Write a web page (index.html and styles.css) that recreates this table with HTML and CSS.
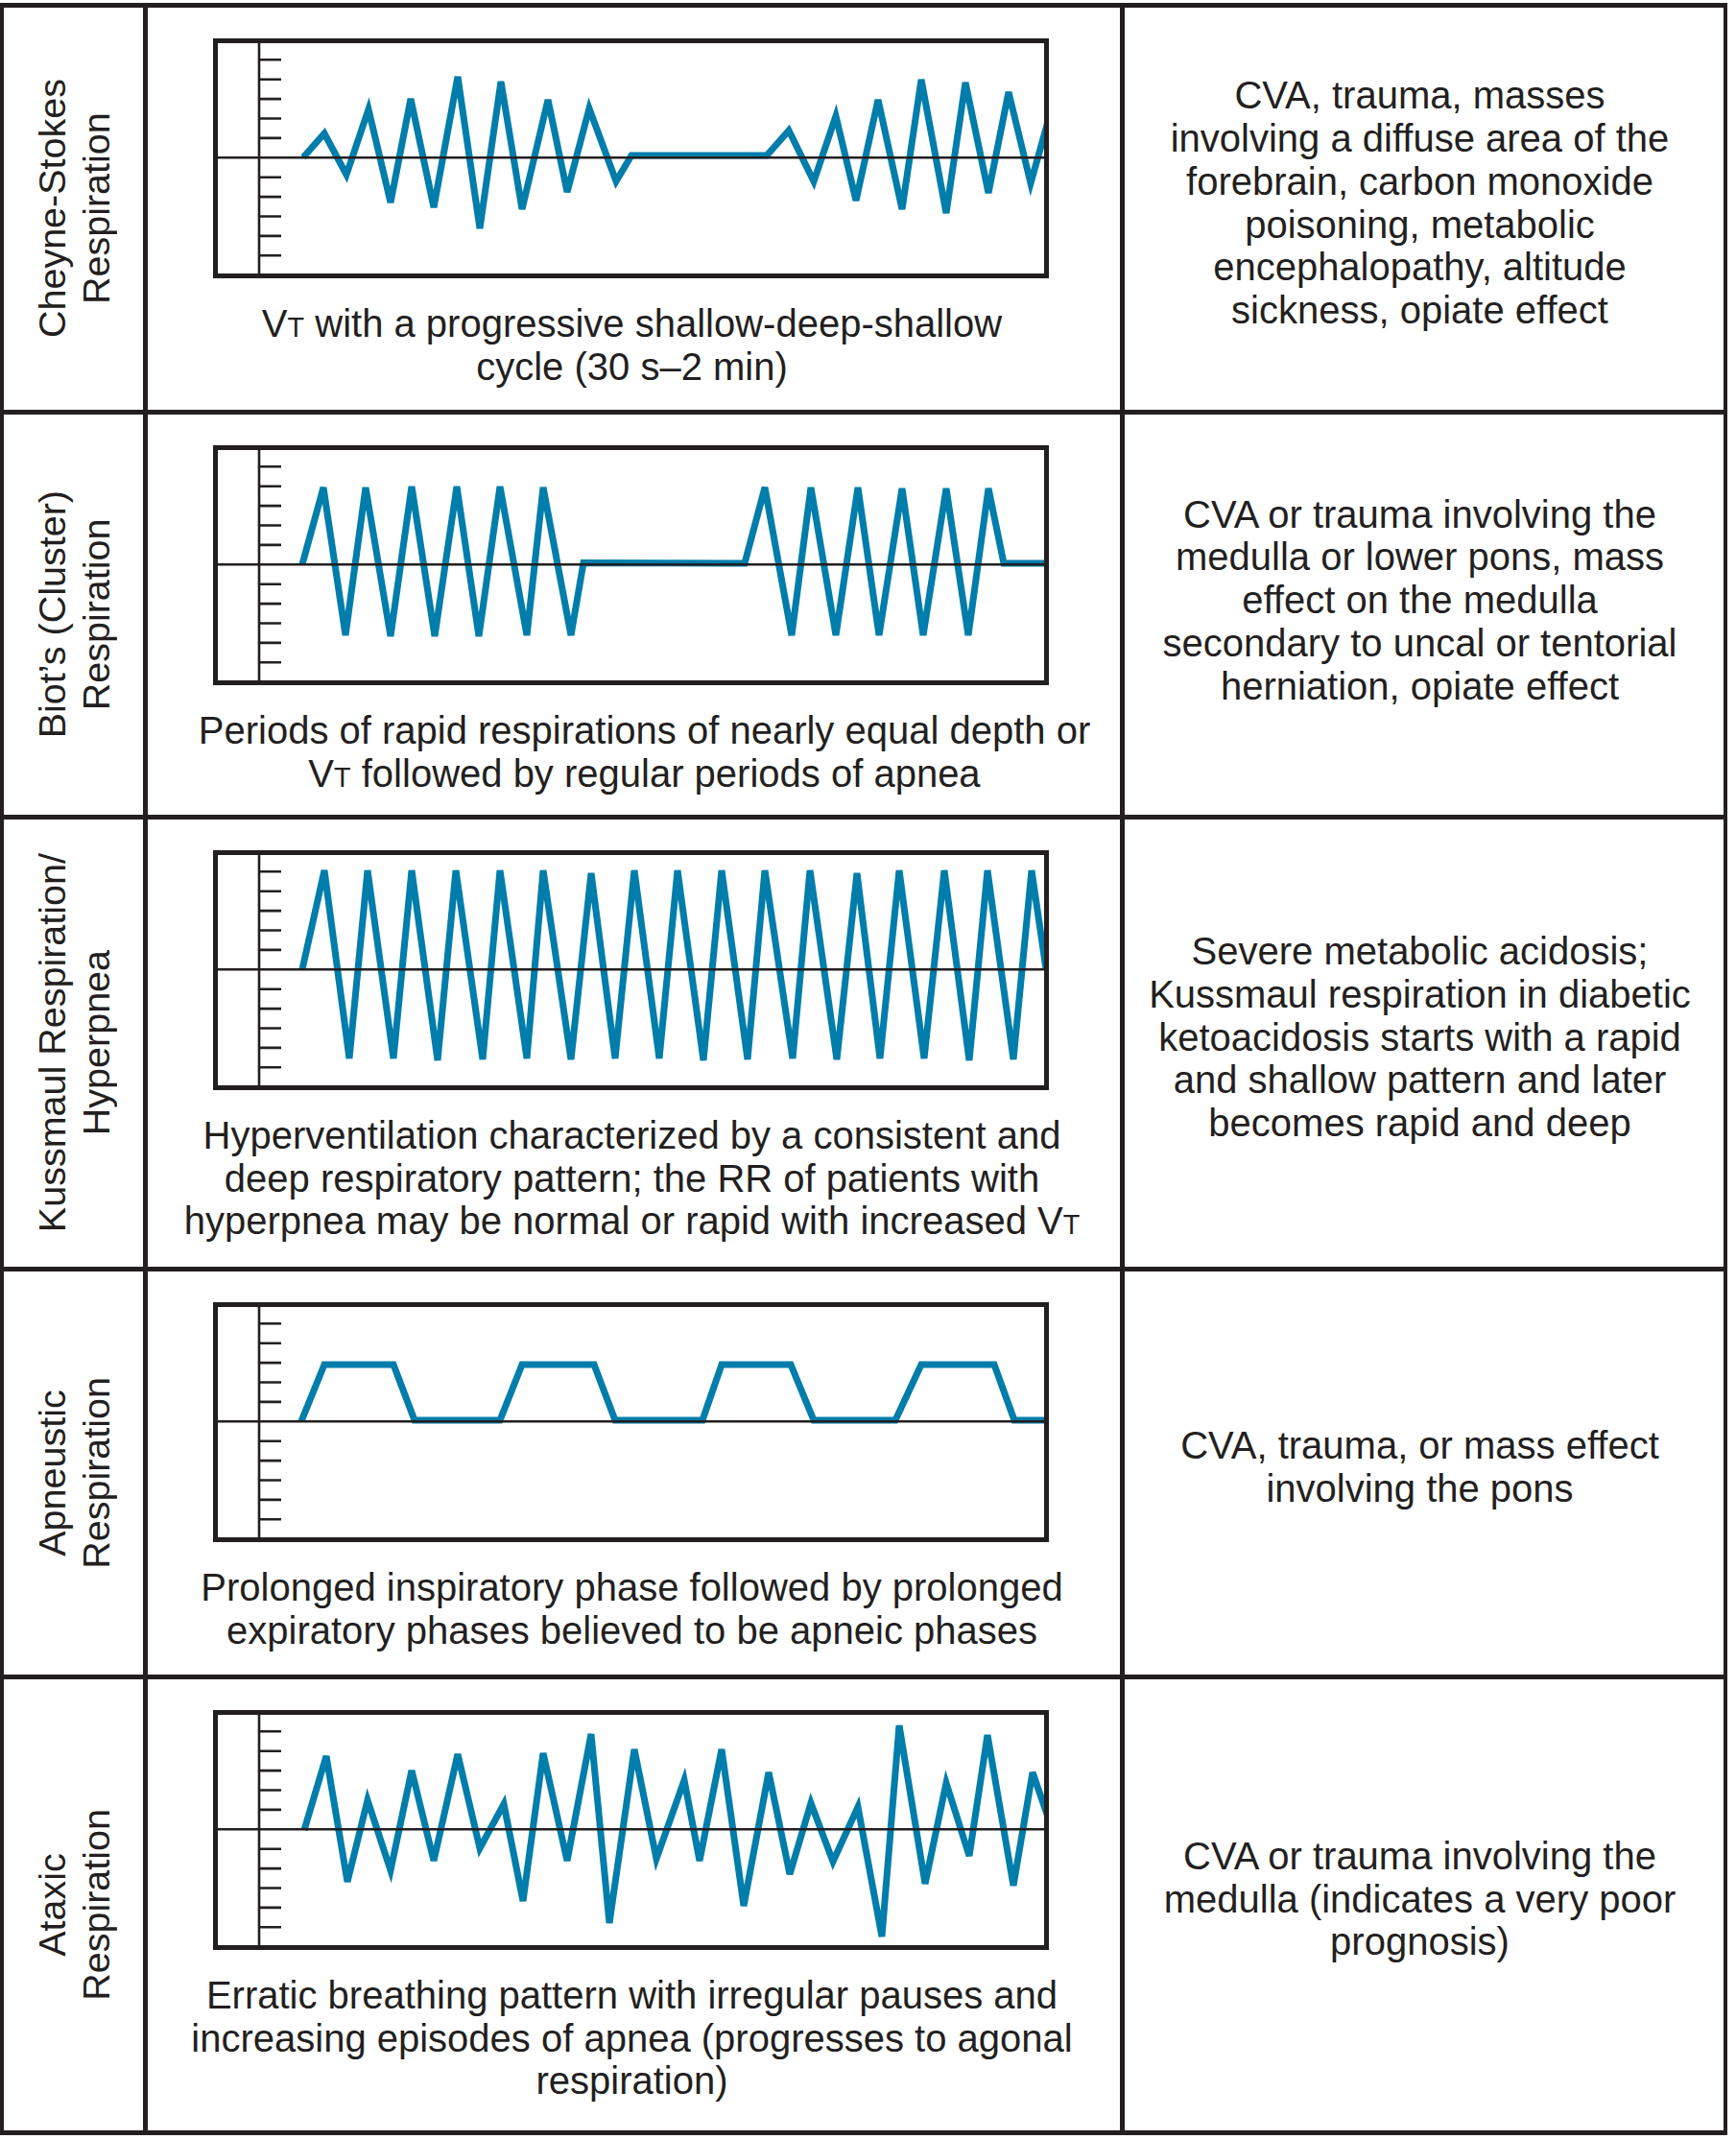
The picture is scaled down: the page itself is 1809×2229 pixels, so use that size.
FILE: index.html
```html
<!DOCTYPE html>
<html lang="en">
<head>
<meta charset="utf-8">
<title>Abnormal Respiratory Patterns</title>
<link rel="stylesheet" href="styles.css">
</head>
<body>
<div class="table">

  <div class="cell label"><div class="vtext">Cheyne-Stokes<br>Respiration</div></div>
  <div class="cell pattern">
    <svg class="chart" viewBox="0 0 871 250" width="871" height="250">
      <polyline class="wave" points="94,124 116,99 139,142 162,74 185,171 206,63 230,176 255,40 278,198 300,45 322,178 349,64 369,160 392,73 420,149 436,122 577,122 600,96 626,149 649,81 670,169 693,64 718,178 738,43 764,182 784,46 808,161 829,56 852,151 866,101 874,73"/>
      <path class="grid" d="M0 124.3H871M48 0V250M48 22.3H71M48 42.7H71M48 63.1H71M48 83.5H71M48 103.9H71M48 144.7H71M48 165.1H71M48 185.5H71M48 205.9H71M48 226.3H71"/>
      <rect class="frame" x="2.5" y="2.5" width="866" height="245"/>
    </svg>
    <p class="caption">V<span class="sc">T</span> with a progressive shallow-deep-shallow<br>cycle (30 s–2 min)</p>
  </div>
  <div class="cell cause"><p>CVA, trauma, masses<br>involving a diffuse area of the<br>forebrain, carbon monoxide<br>poisoning, metabolic<br>encephalopathy, altitude<br>sickness, opiate effect</p></div>

  <div class="cell label"><div class="vtext">Biot’s (Cluster)<br>Respiration</div></div>
  <div class="cell pattern">
    <svg class="chart" viewBox="0 0 871 250" width="871" height="250">
      <polyline class="wave" points="93,124 115,44 138,198 159,44 185,199 207,43 231,199 254,43 277,199 299,43 327,198 344,44 373,198 386,122.5 554,123 575,44 603,198 623,44 649,198 672,44 694,198 718,45 740,198 764,45 787,198 808,45 824,123 874,123"/>
      <path class="grid" d="M0 124.3H871M48 0V250M48 22.3H71M48 42.7H71M48 63.1H71M48 83.5H71M48 103.9H71M48 144.7H71M48 165.1H71M48 185.5H71M48 205.9H71M48 226.3H71"/>
      <rect class="frame" x="2.5" y="2.5" width="866" height="245"/>
    </svg>
    <p class="caption caption-right">Periods of rapid respirations of nearly equal depth or<br>V<span class="sc">T</span> followed by regular periods of apnea</p>
  </div>
  <div class="cell cause cause-high"><p>CVA or trauma involving the<br>medulla or lower pons, mass<br>effect on the medulla<br>secondary to uncal or tentorial<br>herniation, opiate effect</p></div>

  <div class="cell label"><div class="vtext">Kussmaul Respiration/<br>Hyperpnea</div></div>
  <div class="cell pattern">
    <svg class="chart" viewBox="0 0 871 250" width="871" height="250">
      <polyline class="wave" points="93,124 116,21 142,217 161,21 188,217 207,21 234,219 253,21 281,218 299,21 327,217 344,21 373,218 394,24 419,217 439,21 465,217 484,21 511,219 530,21 557,218 575,21 604,217 622,21 650,218 671,24 695,217 715,21 741,217 762,21 788,219 807,21 834,218 853,21 868,124"/>
      <path class="grid" d="M0 124.3H871M48 0V250M48 22.3H71M48 42.7H71M48 63.1H71M48 83.5H71M48 103.9H71M48 144.7H71M48 165.1H71M48 185.5H71M48 205.9H71M48 226.3H71"/>
      <rect class="frame" x="2.5" y="2.5" width="866" height="245"/>
    </svg>
    <p class="caption">Hyperventilation characterized by a consistent and<br>deep respiratory pattern; the RR of patients with<br>hyperpnea may be normal or rapid with increased V<span class="sc">T</span></p>
  </div>
  <div class="cell cause"><p>Severe metabolic acidosis;<br>Kussmaul respiration in diabetic<br>ketoacidosis starts with a rapid<br>and shallow pattern and later<br>becomes rapid and deep</p></div>

  <div class="cell label"><div class="vtext">Apneustic<br>Respiration</div></div>
  <div class="cell pattern">
    <svg class="chart" viewBox="0 0 871 250" width="871" height="250">
      <polyline class="wave" points="92,124 116,65 188,65 210,123 299,123 322,65 397,65 419,123 510,123 530,65 602,65 626,123 711,123 738,65 814,65 835,123 874,123"/>
      <path class="grid" d="M0 124.3H871M48 0V250M48 22.3H71M48 42.7H71M48 63.1H71M48 83.5H71M48 103.9H71M48 144.7H71M48 165.1H71M48 185.5H71M48 205.9H71M48 226.3H71"/>
      <rect class="frame" x="2.5" y="2.5" width="866" height="245"/>
    </svg>
    <p class="caption">Prolonged inspiratory phase followed by prolonged<br>expiratory phases believed to be apneic phases</p>
  </div>
  <div class="cell cause"><p>CVA, trauma, or mass effect<br>involving the pons</p></div>

  <div class="cell label"><div class="vtext">Ataxic<br>Respiration</div></div>
  <div class="cell pattern">
    <svg class="chart" viewBox="0 0 871 250" width="871" height="250">
      <polyline class="wave" points="95,125 118,48 140,179 161,94 185,167 207,63 230,157 255,46 278,144 303,98 323,199 344,45 369,157 394,25 413,222 439,41 462,155 491,73 507,157 530,41 553,204 579,65 601,171 623,97 646,158 672,101 697,236 715,16 742,181 764,76 788,152 807,26 834,183 854,65 874,123"/>
      <path class="grid" d="M0 124.3H871M48 0V250M48 22.3H71M48 42.7H71M48 63.1H71M48 83.5H71M48 103.9H71M48 144.7H71M48 165.1H71M48 185.5H71M48 205.9H71M48 226.3H71"/>
      <rect class="frame" x="2.5" y="2.5" width="866" height="245"/>
    </svg>
    <p class="caption">Erratic breathing pattern with irregular pauses and<br>increasing episodes of apnea (progresses to agonal<br>respiration)</p>
  </div>
  <div class="cell cause"><p>CVA or trauma involving the<br>medulla (indicates a very poor<br>prognosis)</p></div>

</div>
</body>
</html>
```

FILE: styles.css
```css
* { box-sizing: border-box; }

html, body {
  margin: 0;
  padding: 0;
  background: #ffffff;
}

body {
  font-family: "Liberation Sans", Arial, sans-serif;
  color: #231f20;
}

.table {
  display: grid;
  grid-template-columns: 145px 1013px 624px;
  grid-template-rows: 419px 417px 466px 420px 470px;
  gap: 5px;
  padding: 5px 4px;
  width: 1800px;
  margin-top: 3px;
  background: #231f20;
}

.cell {
  background: #ffffff;
}

.label {
  display: flex;
  align-items: center;
  justify-content: center;
}

.vtext {
  writing-mode: vertical-rl;
  transform: rotate(180deg);
  font-size: 39.5px;
  line-height: 46px;
  text-align: center;
  white-space: nowrap;
}

.pattern {
  display: flex;
  flex-direction: column;
  padding-top: 32px;
}

.chart {
  display: block;
  margin-left: 68px;
}

.wave {
  fill: none;
  stroke: #007dab;
  stroke-width: 7;
  stroke-linejoin: miter;
  stroke-miterlimit: 4;
}

.grid {
  fill: none;
  stroke: #231f20;
  stroke-width: 2.6;
}

.frame {
  fill: none;
  stroke: #231f20;
  stroke-width: 5;
}

.caption {
  margin: 25px 0 0;
  padding-right: 4px;
  font-size: 40px;
  line-height: 44.5px;
  text-align: center;
  white-space: nowrap;
}

.caption-right {
  padding-right: 0;
  padding-left: 22px;
}

.sc {
  font-size: 0.72em;
  line-height: 1;
}

.cause {
  display: flex;
  align-items: center;
  justify-content: center;
  padding-right: 9px;
  padding-bottom: 12px;
}

.cause-high {
  padding-bottom: 30px;
}

.cause p {
  margin: 0;
  font-size: 40px;
  line-height: 44.7px;
  text-align: center;
  white-space: nowrap;
}
```
